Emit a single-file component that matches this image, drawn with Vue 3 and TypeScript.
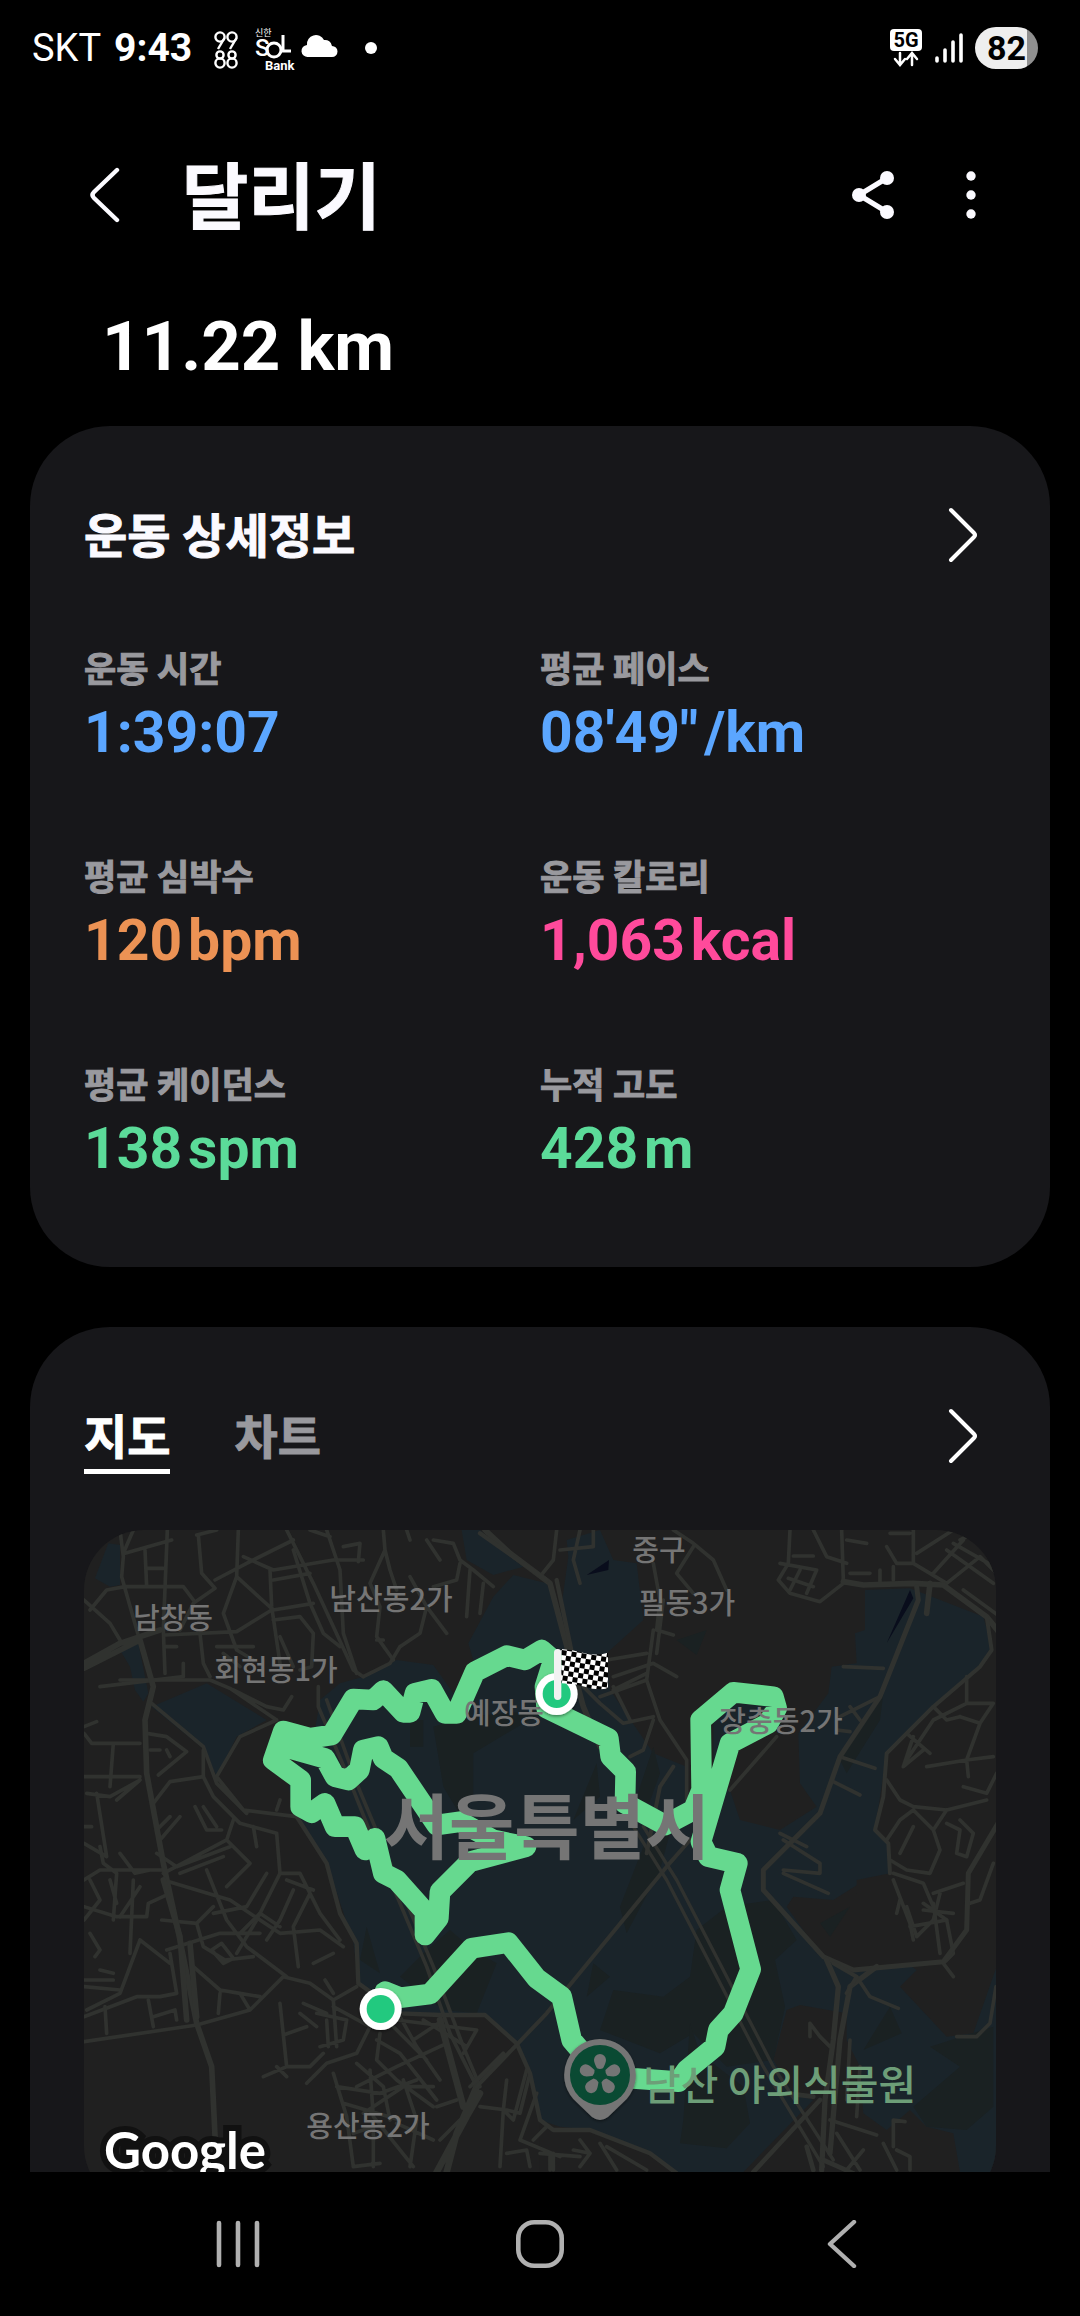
<script setup lang="ts">
import { ref } from 'vue'

interface Stat {
  label: string
  value: string
  unit?: string
  tone: 'blue' | 'orange' | 'pink' | 'green'
}

interface Place {
  name: string
  x: number
  y: number
}

const stats: Stat[] = [
  { label: '운동 시간', value: '1:39:07', tone: 'blue' },
  { label: '평균 페이스', value: '08\'49"', unit: '/km', tone: 'blue' },
  { label: '평균 심박수', value: '120', unit: 'bpm', tone: 'orange' },
  { label: '운동 칼로리', value: '1,063', unit: 'kcal', tone: 'pink' },
  { label: '평균 케이던스', value: '138', unit: 'spm', tone: 'green' },
  { label: '누적 고도', value: '428', unit: 'm', tone: 'green' },
]

const tabs = ['지도', '차트']
const activeTab = ref('지도')

const places: Place[] = [
  { name: '남창동', x: 89, y: 99 },
  { name: '회현동1가', x: 192, y: 151 },
  { name: '남산동2가', x: 307, y: 80 },
  { name: '예장동', x: 420, y: 194 },
  { name: '중구', x: 575, y: 31 },
  { name: '필동3가', x: 603, y: 84 },
  { name: '장충동2가', x: 697, y: 202 },
  { name: '용산동2가', x: 284, y: 607 },
]

const petals = [0, 72, 144, 216, 288]
</script>

<template>
  <div class="screen">
    <div class="status">
      <span class="carrier">SKT</span>
      <span class="clock">9:43</span>
      <svg class="note-icons" width="170" height="48" viewBox="0 0 170 48" aria-hidden="true">
        <g fill="none" stroke="#fff" stroke-width="2.4">
          <circle cx="8" cy="13" r="4.600" /><path d="M12.500 14 L6 25" />
          <circle cx="20" cy="13" r="4.600" /><path d="M24.500 14 L18 25" />
          <circle cx="8" cy="31" r="3.600" /><circle cx="20" cy="31" r="3.600" />
          <circle cx="8" cy="39" r="4.600" /><circle cx="20" cy="39" r="4.600" />
        </g>
        <text x="43" y="12" class="tiny-ko">신한</text>
        <text x="43" y="32" class="sol">S</text>
        <circle cx="62" cy="26" r="7" fill="none" stroke="#fff" stroke-width="3" />
        <path d="M71 11 V27 H79" fill="none" stroke="#fff" stroke-width="3" />
        <text x="53" y="46" class="bank">Bank</text>
        <path d="M96 33 a6 6 0 0 1 -1 -12 a9 9 0 0 1 17 -5 a7 7 0 0 1 8 6 a5.500 5.500 0 0 1 0 11 Z" fill="#fff" />
        <circle cx="159" cy="24" r="6" fill="#fff" />
      </svg>
      <div class="system">
        <svg width="34" height="40" viewBox="0 0 34 40" aria-hidden="true">
          <rect x="1" y="1" width="32" height="22" rx="4" fill="#fff" />
          <text x="17" y="19" class="net">5G</text>
          <g fill="none" stroke="#fff" stroke-width="2.500" stroke-linecap="round">
            <path d="M11 25 V36 M6 31 L11 37 L16 31" />
            <path d="M23 37 V26 M18 31 L23 25 L28 31" />
          </g>
        </svg>
        <svg width="28" height="32" viewBox="0 0 28 32" aria-hidden="true">
          <path d="M2 26 V29 M10 18 V29 M18 10 V29 M26 3 V29" stroke="#fff" stroke-width="3.600" stroke-linecap="round" />
        </svg>
        <span class="battery">82</span>
      </div>
    </div>

    <header class="top">
      <button class="icon-btn" aria-label="뒤로">
        <svg width="30" height="56" viewBox="0 0 30 56">
          <path d="M27 3 L4 25 Q1 28 4 31 L27 53" fill="none" stroke="#fbfaff" stroke-width="4.400" stroke-linecap="round" />
        </svg>
      </button>
      <h1>달리기</h1>
      <button class="icon-btn wide" aria-label="공유">
        <svg width="44" height="50" viewBox="0 0 44 50">
          <path d="M36 8 L8 25 L36 42" fill="none" stroke="#fbfaff" stroke-width="5.200" />
          <g fill="#fbfaff"><circle cx="36" cy="8" r="7" /><circle cx="8" cy="25" r="7" /><circle cx="36" cy="42" r="7" /></g>
        </svg>
      </button>
      <button class="icon-btn wide" aria-label="더보기">
        <svg width="12" height="50" viewBox="0 0 12 50">
          <g fill="#fbfaff"><circle cx="6" cy="6" r="4.700" /><circle cx="6" cy="25" r="4.700" /><circle cx="6" cy="44" r="4.700" /></g>
        </svg>
      </button>
    </header>

    <main>
      <p class="distance">11.22 km</p>

      <section class="card">
        <div class="card-head">
          <h2>운동 상세정보</h2>
          <button class="icon-btn" aria-label="운동 상세정보 보기">
            <svg width="30" height="56" viewBox="0 0 30 56">
              <path d="M3 3 L26 26 Q28 28 26 30 L3 53" fill="none" stroke="#fff" stroke-width="4" stroke-linecap="round" />
            </svg>
          </button>
        </div>
        <dl class="stats">
          <div v-for="s in stats" :key="s.label">
            <dt>{{ s.label }}</dt>
            <dd :class="s.tone"><span>{{ s.value }}</span><span v-if="s.unit">{{ s.unit }}</span></dd>
          </div>
        </dl>
      </section>

      <section class="card map-card">
        <div class="card-head">
          <div class="tabs" role="tablist">
            <button
              v-for="t in tabs"
              :key="t"
              role="tab"
              class="tab"
              :class="{ active: t === activeTab }"
              :aria-selected="t === activeTab"
              @click="activeTab = t"
            >{{ t }}</button>
          </div>
          <button class="icon-btn" aria-label="지도 보기">
            <svg width="30" height="56" viewBox="0 0 30 56">
              <path d="M3 3 L26 26 Q28 28 26 30 L3 53" fill="none" stroke="#fff" stroke-width="4" stroke-linecap="round" />
            </svg>
          </button>
        </div>

        <svg class="map" viewBox="0 0 912 676" role="img" aria-label="달리기 경로 지도">
          <defs>
            <pattern id="checker" width="30" height="30" patternUnits="userSpaceOnUse" patternTransform="translate(1446 390) rotate(9)">
              <rect width="30" height="30" fill="#fff" />
              <path d="M0 0 H15 V15 H0 Z M15 15 H30 V30 H15 Z" fill="#000" />
            </pattern>
            <filter id="drop" x="-30%" y="-30%" width="160%" height="160%">
              <feDropShadow dx="0" dy="4" stdDeviation="5" flood-color="#000" flood-opacity="0.450" />
            </filter>
          </defs>

          <g transform="scale(0.33333) translate(-12 -30)">
            <!-- parks -->
            <g fill="#1a242a">
              <path d="M85 70 L120 75 V195 L90 200 L45 175 Z" />
              <path d="M120 390 L175 370 L205 520 L190 545 L165 510 L150 440 Z" />
              <path d="M215 560 L380 490 L560 600 L470 650 L410 770 L375 690 Z" />
              <path d="M1145 30 H1200 L1250 80 L1330 140 L1240 165 L1160 120 Z" />
              <path d="M1300 165 L1400 190 L1440 290 L1465 110 L1460 60 L1560 30 L1600 120 L1670 130 L1690 300 L1580 400 L1590 510 L1720 700 L1820 740 L1825 830 L1950 810 L1980 900 L2100 930 L2210 860 L2160 790 L2155 640 L2245 520 L2255 440 L2330 430 L2325 340 L2355 330 V210 L2490 205 L2710 290 L2735 380 L2700 440 L2420 700 L2415 800 L2385 930 L2420 960 L2430 1060 L2300 1150 L2780 1100 V2080 H1700 L1530 1830 L1440 1820 L1380 1800 L1350 1660 L1310 1570 L1215 1485 L1080 1485 L960 1480 L835 1390 L820 1265 L740 1030 L640 880 L620 760 L700 660 L720 540 L780 490 L850 470 L950 420 L1060 435 L1120 520 L1180 420 L1165 370 L1240 230 Z" />
              <path d="M1900 590 L1960 550 L2090 560 L2070 620 L1950 650 L1900 780 Z" />
              <path d="M2700 970 L2780 900 V1120 L2690 1100 Z" />
            </g>
            <!-- built-up blocks inside the park -->
            <g fill="#202020">
              <path d="M2355 1080 H2760 V1310 L2680 1540 L2600 1550 L2460 1400 L2510 1350 L2480 1330 L2340 1355 L2230 1315 L2120 1160 L2140 1130 L2260 1140 Z" />
              <path d="M1380 1810 L1420 1830 H1530 L1710 1900 L1780 1956 V2080 H1380 Z" />
              <path d="M1990 1956 L2200 1740 L2140 1720 L2080 1620 L2120 1470 L2160 1455 L2300 1480 V1560 L2340 1640 L2350 1780 L2420 1830 L2490 1770 L2540 1820 L2620 1840 L2640 1956 V2080 H1990 Z" />
              <path d="M2330 1080 L2430 1060 L2420 960 L2385 930 L2420 700 L2735 400 H2780 V1120 H2330 Z" />
            </g>
            <!-- woodland -->
            <g fill="#1a2122">
              <path d="M1060 620 L1150 590 L1400 570 L1280 640 L1180 700 L1180 820 L1150 900 L1090 800 Z" />
              <path d="M1600 1410 L1750 1430 L1830 1370 L1850 1230 L1940 1160 L2080 1140 L2150 1260 L2085 1320 L2115 1460 L2080 1620 L1940 1640 L1840 1540 L1740 1600 L1560 1530 Z" />
              <path d="M1830 1510 L1810 1800 L1800 1870 L1940 1885 L2010 1810 L1990 1700 L1860 1600 Z" />
              <path d="M1550 730 L1480 900 L1560 830 Z M1720 680 L1660 860 L1700 870 L1740 760 Z" />
              <path d="M1690 980 L1780 900 L1740 1050 L1640 1240 L1620 1160 Z" />
              <path d="M990 600 H1030 V680 H990 Z M860 1220 L840 1320 L900 1360 Z" />
              <path d="M1250 1330 L1190 1480 L1090 1470 L960 1370 L1040 1290 L1110 1230 L1180 1290 Z" />
              <path d="M2400 600 L2410 520 L2280 720 L2300 760 Z M1790 360 L1880 330 L1850 405 Z" />
              <path d="M2430 1460 L2465 1540 L2350 1590 Z M2550 1580 L2740 1520 V1760 L2660 1830 L2540 1820 L2500 1760 L2640 1640 Z" />
              <path d="M1540 1330 L1590 1370 L1520 1430 Z M2220 1210 L2310 1160 L2250 1250 Z" />
            </g>
            <path d="M1520 165 L1587 120 L1585 150 Z M2490 210 L2500 235 L2420 370 Z" fill="#090d1c" />

            <!-- side streets -->
            <g fill="none" stroke="#30322f" stroke-width="11" stroke-linejoin="round" stroke-linecap="round">
              <path d="M120 30 L130 110 L125 170 L210 470 M12 240 L90 310 L120 360 M30 270 L80 210 L135 200 H310 L340 240 M195 90 L200 200 M135 100 L275 60 M262 30 L250 330 L255 460 M200 145 H250 M160 30 L130 100" />
              <path d="M355 45 L365 160 L405 205 L340 250 L300 330 M350 45 L410 30 M475 30 L470 170 L430 280 L470 390 L520 420 M405 180 L500 130 L640 60 M490 110 L580 150 L760 120 L850 120 M620 30 L700 190 L820 450 L850 470 M570 150 L575 260 L600 430 M470 170 L580 270 L700 250 M575 270 L470 335 L255 345 M580 180 L690 160" />
              <path d="M740 30 L780 150 L790 340 L830 460 M640 90 L690 250 L730 340 L780 380 M690 30 L750 50 M790 80 L840 70 L835 125 M910 30 L915 90 L870 190 L900 260 L890 350 L940 420 M915 90 L930 150 L950 210 M990 60 L980 30 M1040 60 L1080 120 M1060 60 L1120 70 L1140 120 L1180 150 L1240 200 M990 170 L1040 260 L1020 340 L960 380 M1040 260 L1100 340 M1060 200 L1130 180 L1140 130 M1170 150 L1160 290 M1210 190 L1200 280" />
              <path d="M580 300 L660 290 L700 340 L695 440 L660 450 M600 350 L640 440 M410 380 H520 M430 400 L480 440 M255 380 L290 380 M360 340 L370 430 L390 470 M310 430 V470 L60 500 M890 360 H910 M960 380 L930 430 L850 470" />
              <path d="M120 480 L390 480 L450 505 L590 600 M460 510 L560 560 L610 570 L635 530 M590 600 L480 650 L410 770 L490 870 L570 880 L650 890 M215 550 L370 680 L410 790 L500 880 M590 870 L600 840 M12 620 L50 605 M12 640 L35 670 H180 M100 670 L90 800 M12 770 H180 M20 820 L90 830 L180 780 M110 840 L180 780 M50 820 L80 1010 L12 970 M12 920 H35" />
              <path d="M200 640 L260 650 L320 695 L235 765 M210 690 H240 M260 690 L270 710 M370 690 V770 L270 785 L220 850 M370 770 L400 830 L480 910 L590 940 M345 860 L380 930 L425 930 M370 860 L410 920 M270 890 L230 930 M300 890 L240 960 M460 900 L440 960 L250 1060 M520 920 L530 980 M590 940 L600 1060 L530 1200 L470 1300 M440 960 L510 1030 L440 1100 M230 1000 L290 1040 L450 980 M120 1000 L165 1060 L210 1050 M60 980 L70 1030 L110 1060 L100 1200 M12 1080 L60 1050 H250 M160 1080 L150 1300 M180 1100 L120 1190 M90 1080 L110 1150 M12 1200 L60 1140 L30 1080" />
              <path d="M250 1080 L450 1140 L600 1240 L720 1230 L790 1280 M300 1060 L430 1010 M380 1050 L440 1200 L500 1280 L620 1370 M600 1060 L660 1060 L720 1180 L780 1260 M640 1110 L600 1200 L560 1260 M690 1120 L640 1220 L655 1340 M620 1080 L700 1110 M400 1180 L500 1160 L560 1060 M12 1160 L110 1190 H200 L205 1150 L270 1120 M245 1200 L350 1210 L400 1160 M260 1290 L420 1240 L540 1240 M350 1210 L370 1280 L435 1320 L520 1310 M395 1290 L430 1330 L460 1315 L425 1270 Z M480 1240 L540 1180 L600 1220 M270 1300 L290 1420 L240 1430 L170 1430 L12 1490 M180 1260 L120 1420 L20 1470 M180 1260 L270 1330 M12 1380 H100 M12 1400 L120 1410 M60 1350 L100 1360 M30 1240 L60 1290 L45 1310" />
              <path d="M12 1565 L350 1515 L510 1470 L610 1370 L690 1390 L760 1440 L830 1400 M75 1460 L80 1540 M205 1440 L220 1520 M220 1490 L285 1470 L290 1500 M340 1340 L420 1410 L480 1420 L540 1430 M420 1420 L415 1480 M480 1420 L510 1470 M600 1450 L620 1640 L550 1670 M610 1545 L680 1520 M710 1480 L800 1500 L790 1560 L720 1580 M740 1500 L745 1580 M760 1440 L770 1580 M830 1600 L740 1630 L680 1690 M830 1600 L870 1520 L760 1460 M620 1640 H690 L730 1600 M700 1670 L740 1630 M670 1450 L740 1480 M660 1480 L710 1520 M700 1330 L760 1300 M735 1380 L760 1420 M590 1640 L620 1670" />
              <path d="M900 1540 L890 1620 L950 1680 L1060 1760 M890 1560 L960 1600 L1070 1740 M960 1490 L1010 1580 L1080 1680 M920 1500 L1040 1620 M830 1700 L950 1640 L1100 1570 M770 1700 L900 1720 L1010 1680 M830 1630 L910 1700 L930 1800 M760 1660 L800 1790 L820 1940 L900 1930 M790 1750 L960 1800 M870 1650 L880 1790 L1000 1940 M850 1780 L970 1700 L1060 1700 M950 1500 L1190 1530 L1150 1600 M1030 1500 L1160 1580 M1000 1560 L1090 1500 M970 1680 L1010 1800 L990 1940 M1070 1760 L1130 1740 M1080 1860 L1140 1800 M950 1810 L1060 1860 M820 1840 L880 1820 L880 1940" />
              <path d="M1260 1620 L1170 1700 M1280 1680 L1270 1770 L1300 1800 L1340 1650 M1200 1760 L1280 1770 L1320 1780 L1350 1660 M1270 1770 L1260 1940 M1370 1720 L1320 1860 L1440 1910 M1360 1860 L1400 1820 M1280 1900 L1340 1890 L1350 1940 M1420 1900 V1950 M1480 1890 L1530 1900 L1500 1940 M1560 1870 L1610 1950 M1580 1880 L1700 1950 M1380 1900 L1500 1910 M1410 1910 V1950 M1500 1860 L1530 1900" />
              <path d="M1430 30 L1420 120 L1380 170 M1500 30 L1480 120 L1500 190 M1540 30 V80 L1440 90 M1720 130 L1740 240 L1730 330 M1780 30 L1840 70 L1900 120 L1940 210 M1840 80 L1790 160 L1840 220 M1750 240 L1730 400 M1720 330 L1700 480 M1730 330 L1780 345 M1580 420 L1700 400 M1600 470 L1720 430 L1790 470 M1600 510 L1700 460 M1510 500 L1560 550 L1630 610 L1720 590 M1560 530 L1700 480 M1700 480 L1740 600 L1820 720 V840 M1720 600 L1690 690 L1650 710 M1600 500 L1650 600" />
              <path d="M2130 30 L2125 130 L2095 180 L2130 220 L2220 245 L2290 190 M2100 130 L2210 150 L2180 220 M2125 175 L2200 200 M2160 150 L2130 210 M2200 30 L2240 110 L2300 130 M2285 30 L2290 180 M2300 60 L2360 70 M2310 160 H2370 M2420 80 L2450 130 H2500 M2430 40 H2490 M2500 30 V130 L2600 190 M2510 100 L2620 30 M2600 90 L2740 190 M2560 160 L2650 60 M2600 190 L2700 110 L2760 170 M2620 70 L2760 150 M2650 210 L2760 290 M2640 60 L2700 30 M2400 150 V190 M2440 140 V180 M2140 108 H2200" />
              <path d="M2290 440 L2410 445 M2280 590 L2400 530 M2310 560 L2340 600 M2270 630 L2310 635 M2280 710 L2385 745 M2260 785 L2340 825 M1950 810 L2090 650 M2660 470 V550 L2560 600 L2480 720 M2660 550 L2740 550 L2700 610 L2640 590 M2700 610 L2660 720 L2540 740 M2560 560 L2600 600 L2640 590 M2500 650 L2470 740 L2530 690 M2480 640 L2550 700 M2660 720 L2740 710 M2660 720 L2665 770 M2420 780 L2460 840 L2500 860 L2600 870 L2720 840 M2600 870 L2560 930 L2580 990 L2550 1060 L2480 1050 L2430 1020 M2460 900 L2500 870 L2560 930 M2460 900 L2420 960 M2500 920 L2460 1000 M2650 800 L2720 820 L2750 760 M2640 900 L2680 940 L2660 1010 L2630 1000 L2640 930 L2600 910 M2480 1160 L2510 1250 L2560 1200 L2580 1120 M2440 1060 L2530 1090 L2560 1160 M2460 1140 L2450 1180 M2490 1220 L2600 1200 M2530 1170 L2620 1180 M2560 1120 L2650 1090" />
              <path d="M2110 960 L2220 1030 V1060 L2110 1050 M2110 1060 L2245 1120 M2100 940 L2180 980 M2440 1080 L2490 1210 L2500 1260 M2530 1150 L2600 1200 L2620 1300 L2590 1330 L2620 1370 M2560 1150 L2580 1300 M2740 1030 L2700 1140 L2670 1150 M2190 1510 L2220 1550 L2250 1580 M2190 1550 V1510 M2330 1370 L2370 1430 L2455 1465 M2630 1550 H2690 L2730 1510 L2748 1400 M2440 1880 L2440 1800 L2475 1805 M2410 1870 L2450 1950 M2450 1890 L2490 1910 V1950 M2310 1560 L2300 1740 M2340 1640 L2330 1790 M2250 1800 L2390 1845 M2270 1840 L2340 1950 M2350 1890 L2300 1950" />
            </g>

            <!-- main roads -->
            <g fill="none" stroke="#30322f" stroke-width="17" stroke-linejoin="round" stroke-linecap="round">
              <path d="M12 430 L120 370 L240 330 M12 445 L180 360 L220 500 L195 600 L200 760 L250 1030 L300 1260 L350 1510 L395 1640 L410 1950" />
              <path d="M250 1080 L300 1250 L320 1500 M330 1270 L350 1490" />
              <path d="M1215 30 L1290 100 L1410 190 L1450 340 L1510 560 L1560 680" />
              <path d="M1200 40 L1300 110 L1400 180 M1430 180 L1480 420" stroke-width="13" />
              <path d="M650 890 L740 1030 L780 1180 L830 1270 L835 1390 L960 1480 L1080 1485 L1215 1485 L1310 1570 L1350 1660 L1380 1800 L1420 1830 H1530 L1710 1900 L1790 1960" stroke-width="13" />
              <path d="M715 500 V560 L800 760 L880 960 L1040 1340 L1110 1540 L1190 1700 M740 540 L830 790 L1060 1340 L1150 1580 L1200 1700" stroke-width="11" />
              <path d="M1190 1700 L1130 1840 L1100 1956 M1200 1720 L1160 1790 L1070 1956 M1080 1500 L1150 1760" stroke-width="20" />
              <path d="M1190 1700 L1400 1480 L1760 1040 L1830 960 M1270 1600 L1180 1690" stroke-width="12" />
              <path d="M1660 920 L1760 1080 L2050 1640 L2230 1940 M1690 920 L1790 1080 L2080 1640 L2260 1920" stroke-width="10" />
              <path d="M2290 185 L2350 195 L2500 190 L2590 195 L2720 290 L2760 340 M2550 190 L2540 280" />
              <path d="M2510 200 L2515 240 L2400 530 L2280 710 L2220 880 L2050 1050 V1110 L2230 1310 L2320 1350 L2590 1325 L2660 1230 L2665 1060 L2760 900" stroke-width="15" />
              <path d="M2720 290 L2735 390 L2700 440 L2560 560 L2420 700 L2410 830 L2385 930 L2425 970 L2430 1060" stroke-width="12" />
              <path d="M2240 1320 L2275 1400 L2260 1560 L2235 1740 L2225 1950 M2390 1340 L2310 1400 L2280 1560 L2250 1900" stroke-width="16" />
              <path d="M2020 1956 L2220 1740 M2200 1730 L2120 1720 M2180 1880 L2200 1950 M2230 1920 L2320 1960" stroke-width="14" />
              <path d="M2260 1330 L2330 1370 L2300 1420 M1780 740 L1740 800 L1700 1000" stroke-width="12" />
            </g>

            <!-- running route -->
            <path
              d="M915 1415 L960 1433 L1050 1422 L1175 1285 L1285 1268 L1370 1375 L1445 1430 L1475 1560 L1560 1660 L1660 1675 L1795 1685 L1820 1650 L1905 1580 L1915 1530 L1960 1480 L2012 1348 L1950 1110 L1972 1030 L1885 1010 L1863 965 L1950 670 L2065 610 L2090 565 L2080 530 L1960 517 L1862 600 L1865 810 L1840 870 L1755 915 L1635 850 L1637 755 L1592 710 L1585 655 L1400 565 L1395 500 L1420 420 L1385 390 L1335 420 L1280 407 L1185 455 L1130 580 L1095 580 L1055 508 L1005 520 L990 577 L970 577 L910 512 L880 540 L820 537 L755 645 L690 655 L610 633 L580 720 L662 780 V860 L695 878 L735 850 L765 920 L825 920 L855 990 L885 955 L910 1060 L950 1080 L1035 1175 V1245 L1075 1195 L1080 1115 L1170 1025 L1338 980 L1240 960 L1140 905 L1070 915 L955 745 L910 715 L895 680 L850 690 L838 750 L805 780 L765 770 L735 715 L610 680"
              fill="none" stroke="#66d98f" stroke-width="62" stroke-linejoin="round" stroke-linecap="round"
            />
          </g>

          <g class="places">
            <text v-for="p in places" :key="p.name" :x="p.x" :y="p.y">{{ p.name }}</text>
          </g>
          <text class="city" x="463" y="323">서울특별시</text>

          <g transform="scale(0.33333) translate(-12 -30)">
            <g filter="url(#drop)">
              <circle cx="902" cy="1467" r="63" fill="#fff" />
              <circle cx="1430" cy="522" r="63" fill="#fff" />
            </g>
            <circle cx="902" cy="1467" r="42" fill="#22c97f" />
            <circle cx="1430" cy="522" r="42" fill="#22c97f" />
            <path d="M1444 387 Q1480 389 1515 400 Q1550 408 1584 398 V505 Q1550 512 1515 500 Q1480 490 1444 490 Z" fill="url(#checker)" />
            <rect x="1422" y="387" width="22" height="153" rx="11" fill="#f2f2f2" />

            <g transform="translate(1560 1665)">
              <path d="M0 -108 A108 108 0 0 1 80 72 L24 126 Q0 144 -24 126 L-80 72 A108 108 0 0 1 0 -108 Z" fill="#757575" filter="url(#drop)" />
              <circle r="90" fill="#0a4a33" />
              <g fill="#757575">
                <path v-for="a in petals" :key="a" :transform="`rotate(${a})`" d="M-9 -20 C-14 -30 -18 -38 -18 -45 A18 18 0 0 1 18 -45 C18 -38 14 -30 9 -20 Q0 -16 -9 -20 Z" />
              </g>
            </g>
          </g>

          <text class="poi" x="559" y="570">남산 야외식물원</text>
          <text class="brand" x="20" y="639">Google</text>
        </svg>
      </section>
    </main>

    <nav class="system-nav">
      <button aria-label="최근 앱">
        <svg width="44" height="48" viewBox="0 0 44 48">
          <path d="M3 3 V45 M22 3 V45 M41 3 V45" stroke="#b0b0b0" stroke-width="4.600" stroke-linecap="round" />
        </svg>
      </button>
      <button aria-label="홈">
        <svg width="48" height="48" viewBox="0 0 48 48">
          <rect x="2.300" y="2.300" width="43.400" height="43.400" rx="16" fill="none" stroke="#b0b0b0" stroke-width="4.600" />
        </svg>
      </button>
      <button aria-label="뒤로 가기">
        <svg width="30" height="48" viewBox="0 0 30 48">
          <path d="M27 2 L3 24 L27 46" fill="none" stroke="#b0b0b0" stroke-width="4.400" stroke-linecap="round" stroke-linejoin="round" />
        </svg>
      </button>
    </nav>
  </div>
</template>

<style>
body {
  background: #000;
}
</style>

<style scoped>
.screen {
  display: flex;
  flex-direction: column;
  height: 100vh;
  background: #000;
  color: #fbfaff;
  font-family: Roboto, "Noto Sans CJK KR", sans-serif;
}

button {
  padding: 0;
  border: 0;
  background: none;
  color: inherit;
  font: inherit;
}

svg {
  display: block;
  flex: none;
}

.status {
  display: flex;
  align-items: center;
  flex: none;
  height: 96px;
  padding: 0 42px 0 32px;
  color: #fff;
}

.carrier {
  font-size: 38px;
  font-weight: 400;
}

.clock {
  margin-left: 13px;
  font-size: 39px;
  font-weight: 700;
}

.note-icons {
  margin-left: 20px;
  overflow: visible;
}

.tiny-ko {
  fill: #fff;
  font-size: 9px;
}

.sol {
  fill: #fff;
  font-size: 24px;
  font-weight: 500;
}

.bank {
  fill: #fff;
  font-size: 13px;
  font-weight: 700;
}

.system {
  display: flex;
  align-items: center;
  gap: 12px;
  margin-left: auto;
}

.net {
  fill: #000;
  font-size: 20px;
  font-weight: 700;
  text-anchor: middle;
}

.battery {
  width: 63px;
  border-radius: 21px;
  background: linear-gradient(to right, #eee 82%, #909090 82%);
  color: #000;
  font-size: 34px;
  font-weight: 700;
  line-height: 42px;
  text-align: center;
}

.top {
  display: flex;
  align-items: center;
  flex: none;
  height: 198px;
  padding: 0 60px 0 72px;
}

.icon-btn {
  display: flex;
  align-items: center;
  justify-content: center;
  flex: none;
  width: 66px;
  height: 110px;
}

.icon-btn.wide {
  width: 98px;
}

h1,
h2,
dt,
.tab {
  -webkit-text-stroke: 1px currentColor;
}

h1 {
  flex: 1;
  margin: 0 0 0 44px;
  padding-top: 8px;
  font-size: 72px;
  font-weight: 700;
  line-height: 110px;
}

main {
  flex: 1;
  min-height: 0;
  overflow-y: auto;
  scrollbar-width: none;
}

.distance {
  margin: 0;
  padding: 11px 102px 37px;
  color: #fff;
  font-size: 69px;
  font-weight: 700;
  line-height: 84px;
}

.card {
  margin: 0 30px 60px;
  padding: 54px 54px 82px;
  border-radius: 80px;
  background: #17171a;
}

.card-head {
  display: flex;
  align-items: center;
  justify-content: space-between;
}

h2 {
  margin: 0;
  padding-top: 3px;
  font-size: 47px;
  font-weight: 700;
  line-height: 64px;
}

.stats {
  display: grid;
  grid-template-columns: 1fr 1fr;
  row-gap: 84px;
  margin: 55px 0 0;
}

dt {
  color: #99999e;
  font-size: 35px;
  font-weight: 700;
  line-height: 52px;
}

dd {
  display: flex;
  gap: 6px;
  margin: 0;
  font-size: 57px;
  font-weight: 700;
  line-height: 72px;
}

.blue {
  color: #5ba6ff;
}

.orange {
  color: #ec9254;
}

.pink {
  color: #ff4a9b;
}

.green {
  color: #5bdb99;
}

.tabs {
  display: flex;
  gap: 64px;
}

.tab {
  padding: 9px 0 0;
  border-bottom: 5px solid transparent;
  color: #99999e;
  font-size: 47px;
  font-weight: 700;
  line-height: 62px;
}

.tab.active {
  border-color: #fff;
  color: #fff;
}

.map {
  width: 100%;
  margin-top: 39px;
  border-radius: 60px;
  background: #202020;
}

.places {
  fill: #757575;
  font-size: 29px;
  font-weight: 500;
  text-anchor: middle;
}

.map text {
  font-family: "Noto Sans CJK KR", sans-serif;
}

.city {
  fill: #757575;
  font-size: 71px;
  font-weight: 700;
  text-anchor: middle;
}

.poi {
  fill: #6d9e78;
  font-size: 41px;
  font-weight: 500;
}

.map .brand {
  fill: #fff;
  stroke: #111;
  stroke-width: 12px;
  paint-order: stroke;
  font-family: Lato, sans-serif;
  font-size: 51px;
  font-weight: 700;
}

.system-nav {
  display: grid;
  grid-template-columns: repeat(3, 1fr);
  flex: none;
  height: 144px;
  padding: 0 8%;
  background: #000;
}

.system-nav button {
  display: flex;
  align-items: center;
  justify-content: center;
}
</style>
